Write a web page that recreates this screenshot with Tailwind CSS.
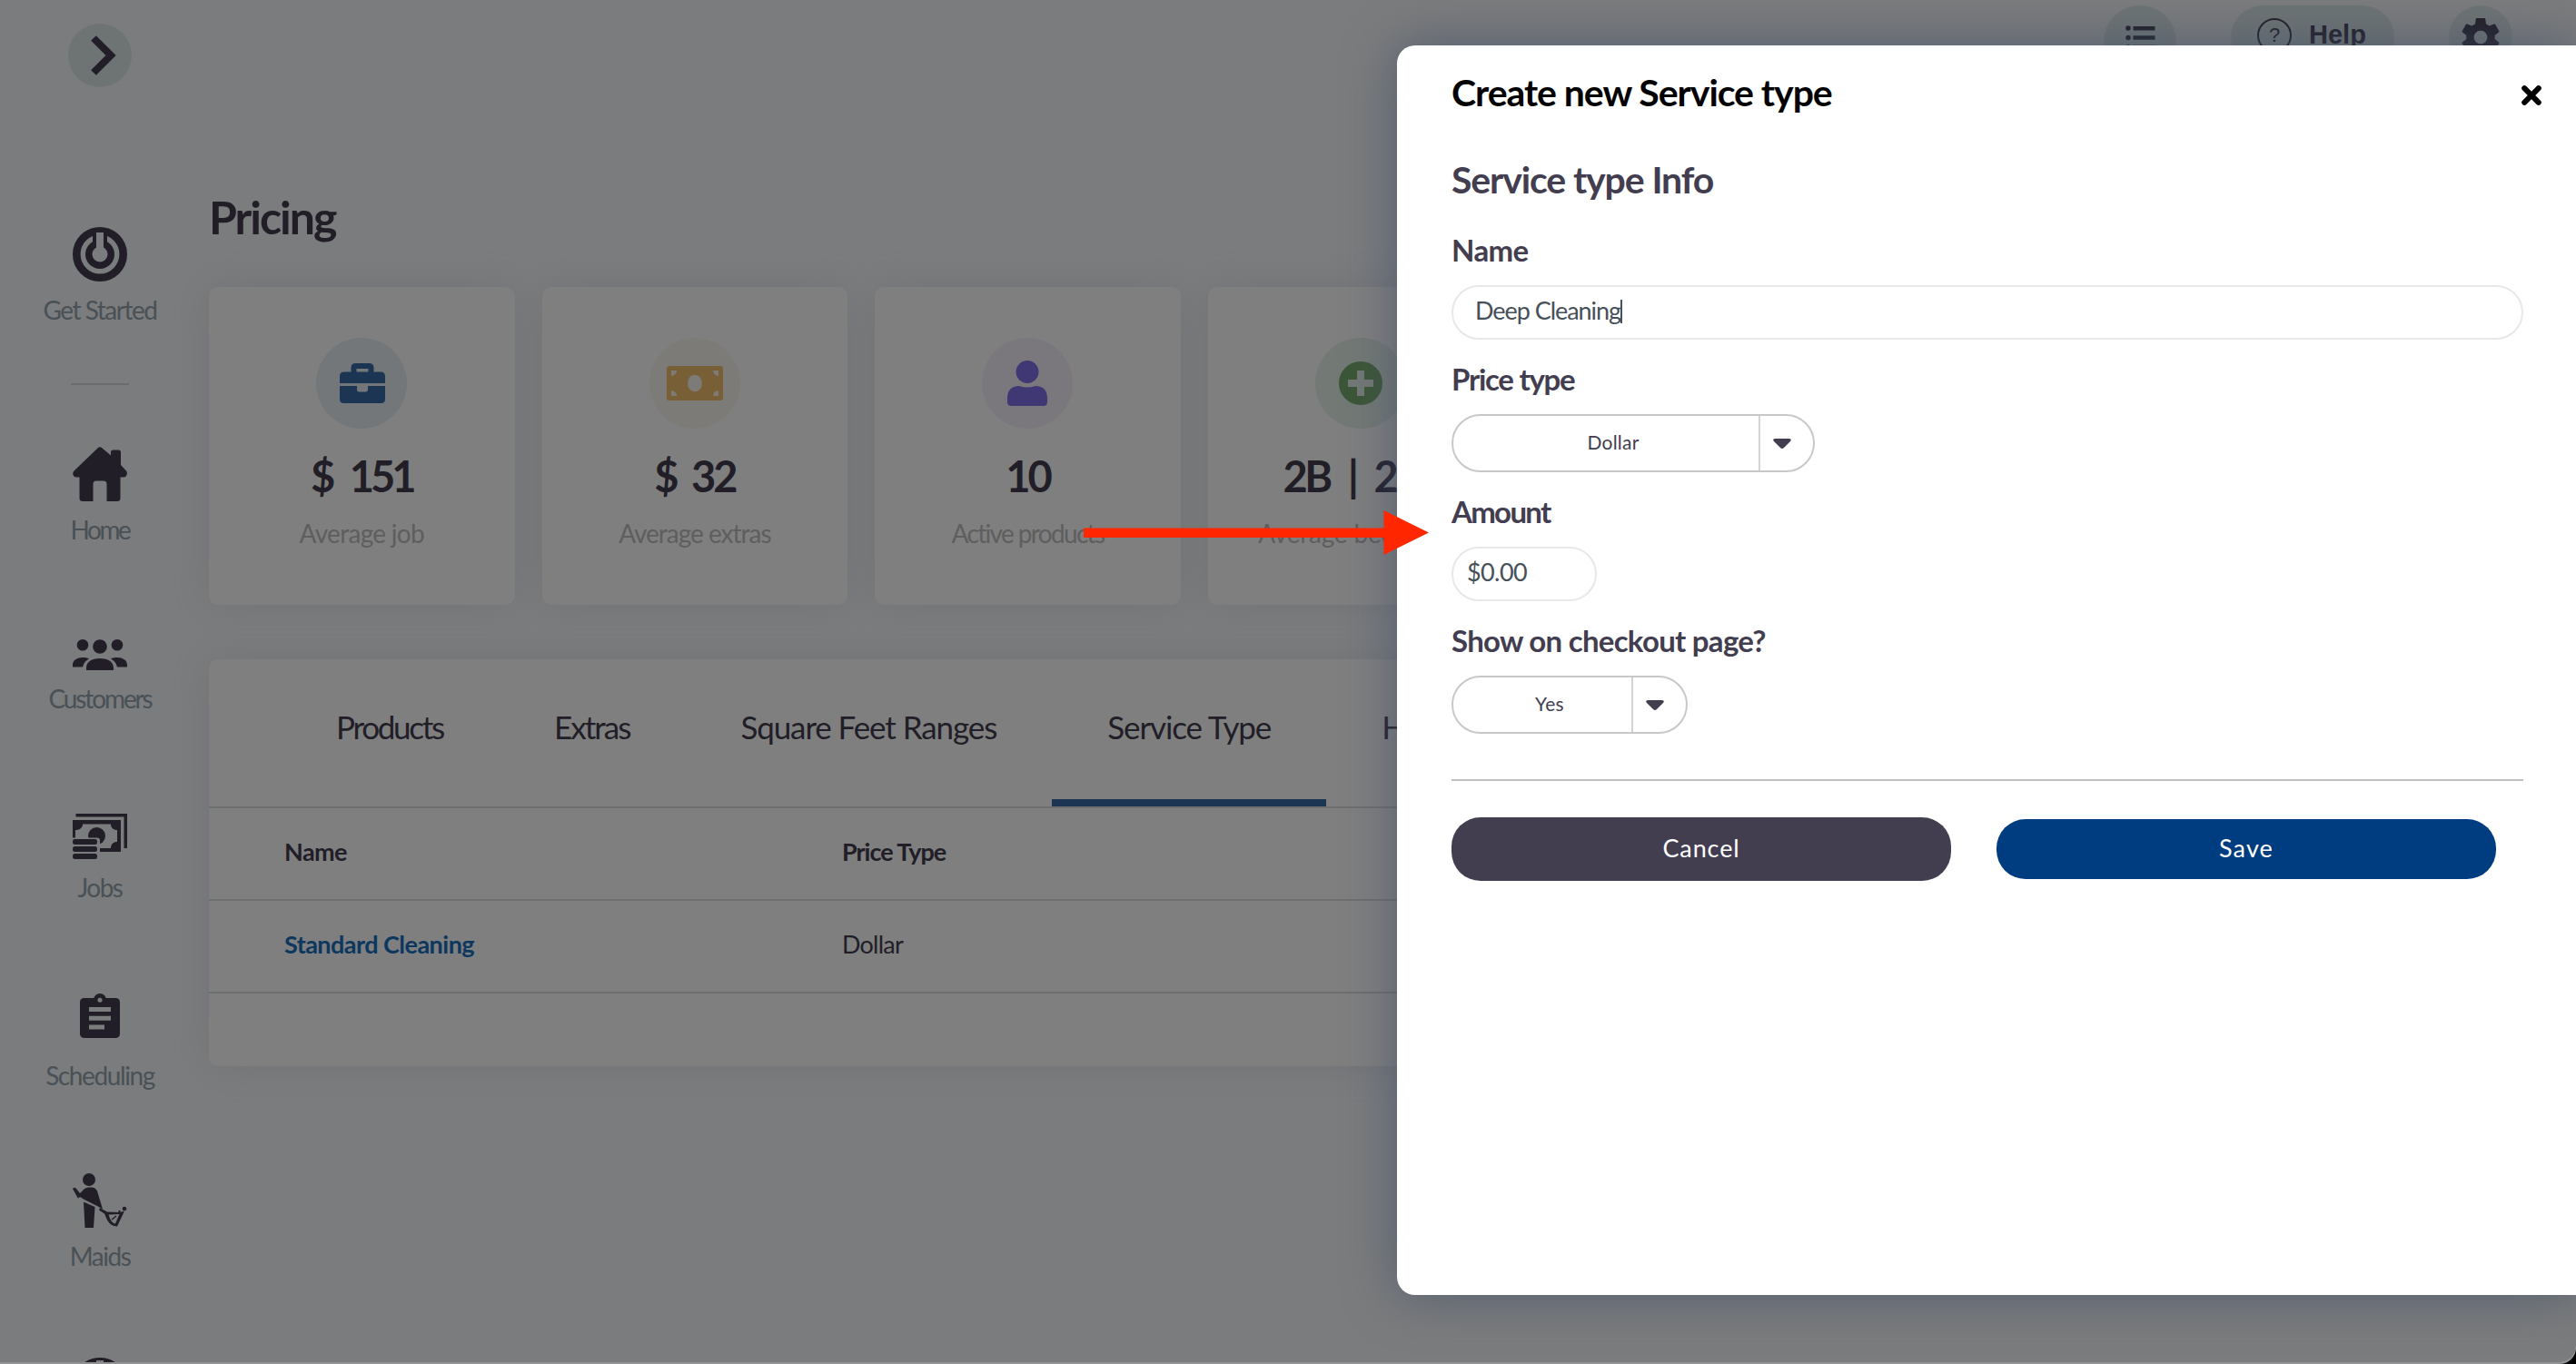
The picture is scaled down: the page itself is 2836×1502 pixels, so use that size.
<!DOCTYPE html>
<html lang="en">
<head>
  <meta charset="UTF-8" />
  <meta name="viewport" content="width=device-width, initial-scale=1.0"/>
  <title>Pricing</title>
  <script src="https://cdn.jsdelivr.net/npm/@tailwindcss/browser@4"></script>
</head>
<body class="bg-black font-['Lato',sans-serif] text-[#433d50]">
  <div class="relative h-[1502px] w-[2836px] overflow-hidden rounded-br-[18px] bg-[#909294]">
    <div class="relative flex h-[1500px] overflow-hidden rounded-br-[18px] bg-[#f6f8fb]">

      <!-- SIDEBAR -->
      <nav class="flex w-[220px] shrink-0 flex-col items-center whitespace-nowrap text-[28px] leading-[34px] text-[#92a3ad]">
        <button class="mt-[26px] flex size-[70px] shrink-0 items-center justify-center rounded-full bg-[#dce8e9]">
          <svg class="ml-[7px] h-[44px] w-[28px]" viewBox="0 0 28 44" fill="none" stroke="#433d50" stroke-width="8"><path d="M3 3l19 19L3 41"/></svg>
        </button>

        <svg class="mt-[154px] size-[60px] shrink-0" viewBox="0 0 60 60">
          <circle cx="30" cy="30" r="25.7" fill="none" stroke="#433d50" stroke-width="8.6"/>
          <circle cx="30" cy="30" r="16" fill="#433d50"/>
          <path d="M22 4h16v18H22z" fill="#433d50"/>
          <circle cx="30" cy="30" r="8.5" fill="#f6f8fb"/>
          <path d="M26 6h8v20h-8z" fill="#f6f8fb"/>
        </svg>
        <span class="mt-[14px] tracking-[-1.5px]">Get Started</span>

        <div class="mt-[64px] h-[2px] w-[64px] shrink-0 bg-[#d5d8db]"></div>

        <svg class="mt-[68px] size-[60px] shrink-0" viewBox="0 0 60 60" fill="#433d50">
          <path d="M27.5 1.5Q30 -1 32.5 1.5L42 9.5V6q0-2.500 2.500-2.500h6q2.500 0 2.500 2.500v14l6 6.500q1.500 2 .5 4.500-1 2.500-3.500 2.500h-3.500v23q0 3.500-3.500 3.500H37.500V41q0-3.500-3.500-3.500h-8q-3.500 0-3.500 3.500v19H11q-3.500 0-3.500-3.500v-23H4Q1.500 33.500.5 31q-.8-2.500 1-4.500z"/>
        </svg>
        <span class="mt-[14px] tracking-[-2.400px]">Home</span>

        <svg class="mt-[104px] h-[34px] w-[60px] shrink-0" viewBox="0 0 60 34" fill="#433d50">
          <circle cx="11" cy="6.3" r="6.3"/><circle cx="49" cy="6.3" r="6.3"/><circle cx="30" cy="8" r="7.8"/>
          <path d="M15 34v-2.500C15 25 21 21 30 21s15 4 15 10.500V34zM0 30.500V28c0-5 5-8 11-8 2.500 0 5 .4 7 1.400-4 2.200-6 5-7 9.100zM60 30.500V28c0-5-5-8-11-8-2.500 0-5 .4-7 1.400 4 2.200 6 5 7 9.100z"/>
        </svg>
        <span class="mt-[14px] tracking-[-2.100px]">Customers</span>

        <svg class="mt-[110px] h-[50px] w-[60px] shrink-0" viewBox="0 0 60 50" fill="#433d50">
          <path d="M3.5 0H60v38h-3.500V3.500h-53z"/>
          <path d="M0 7h53v35H0z"/>
          <path d="M11 11.500h31c0 4 3 6.500 7 6.500v13c-4 0-7 2.500-7 7H3V18c5 0 8-2.500 8-6.500z" fill="#f6f8fb"/>
          <circle cx="26.5" cy="24.5" r="9.5"/>
          <path d="M0 26.500h27q3 0 3 3V50H0z" fill="#f6f8fb"/>
          <rect y="28" width="27" height="6" rx="2.5"/><rect y="36" width="27" height="6" rx="2.5"/><rect y="44" width="27" height="6" rx="2.5"/>
        </svg>
        <span class="mt-[14px] tracking-[-1.500px]">Jobs</span>

        <svg class="mt-[100px] h-[49px] w-[44px] shrink-0" viewBox="0 0 44 49" fill="#433d50">
          <rect y="5" width="44" height="44" rx="4.5"/><circle cx="22" cy="7" r="7"/>
          <circle cx="22" cy="7.2" r="2.5" fill="#f6f8fb"/>
          <path d="M10 15h24v5H10zM10 24.800h24v5H10zM10 34.500h17v5H10z" fill="#f6f8fb"/>
        </svg>
        <span class="mt-[24px] tracking-[-1.400px]">Scheduling</span>

        <svg class="mt-[91px] size-[60px] shrink-0" viewBox="0 0 60 60" fill="#433d50">
          <circle cx="18" cy="7" r="7"/>
          <path d="M0 17q2-2.500 4 0l4 5 5-5q2-1.500 5-1.500h3q4 0 6 4l6 20-5-3-15-7.500-5-3-2 1.500Q6 28 5 26z"/>
          <path d="M12 31.500l12.500 5.500-1.500 23h-9.500z"/>
          <path d="M30 38l8 4.500 14 .5 5-1.500-8 17q-7 0-11-7l-3-7-6-4z"/>
          <path d="M39.500 45.500l12-.5-4.500 10.500q-5-1-7.500-10z" fill="#f6f8fb"/>
          <path d="M43 51l5-4" stroke="#433d50" stroke-width="1.5"/>
          <circle cx="57" cy="39" r="2.3"/><circle cx="51.5" cy="42" r="1.2"/>
        </svg>
        <span class="mt-[14px] tracking-[-1.500px]">Maids</span>

        <svg class="mt-[95px] size-[60px] shrink-0" viewBox="0 0 60 60"><circle cx="30" cy="30" r="25.7" fill="none" stroke="#433d50" stroke-width="8.6"/><path d="M26 3h8v20h-8z" fill="#f6f8fb"/></svg>
      </nav>

      <div class="flex flex-1 flex-col pl-[10px] pr-[70px]">
        <!-- TOP BAR -->
        <header class="mt-[6px] flex h-[80px] shrink-0 items-start justify-end">
          <div class="flex size-[80px] rounded-full bg-[#dce8e9] pl-[24px] pt-[21px]">
            <svg class="h-[30px] w-[34px]" viewBox="0 0 34 30" fill="#433d50"><circle cx="3" cy="4" r="2.8"/><circle cx="3" cy="14.5" r="2.8"/><circle cx="3" cy="25" r="2.8"/><path d="M8.500 2h24v4.500h-24zM8.500 12.300h24v4.500h-24zM8.500 22.700h24v4.500h-24z"/></svg>
          </div>
          <div class="ml-[60px] flex h-[70px] w-[180px] rounded-full bg-[#dce8e9] pl-[29px] pt-[14px]">
            <span class="flex size-[38px] items-center justify-center rounded-full border-2 border-[#433d50] font-['Liberation_Sans',sans-serif] text-[22px] leading-none">?</span>
            <span class="ml-[19px] font-['Liberation_Sans',sans-serif] text-[29px] font-bold leading-[37px]">Help</span>
          </div>
          <div class="ml-[60px] flex size-[70px] justify-center rounded-full bg-[#dce8e9] pt-[14px]">
            <svg class="size-[42px]" viewBox="2 2 20 20" fill="#433d50"><path d="M19.430 12.980c.04-.32.070-.64.070-.98s-.03-.66-.07-.98l2.110-1.650c.19-.15.240-.42.120-.64l-2-3.460c-.12-.22-.39-.3-.61-.22l-2.490 1c-.52-.4-1.080-.73-1.690-.98l-.38-2.650C14.460 2.180 14.250 2 14 2h-4c-.25 0-.46.180-.49.420l-.38 2.650c-.61.250-1.170.590-1.690.980l-2.490-1c-.23-.09-.49 0-.61.220l-2 3.460c-.13.220-.07.490.120.640l2.110 1.650c-.04.320-.07.650-.07.980s.03.660.070.980l-2.110 1.650c-.19.150-.24.420-.12.640l2 3.460c.12.220.39.300.61.220l2.490-1c.52.400 1.080.730 1.690.980l.38 2.650c.03.240.24.420.49.420h4c.25 0 .46-.18.490-.42l.38-2.650c.61-.25 1.170-.59 1.690-.98l2.490 1c.23.090.49 0 .61-.22l2-3.460c.12-.22.070-.49-.12-.64l-2.110-1.650zM12 15.500c-1.930 0-3.500-1.570-3.500-3.500s1.570-3.500 3.500-3.500 3.500 1.570 3.500 3.500-1.570 3.500-3.500 3.500z"/></svg>
          </div>
        </header>

        <h1 class="mt-[122px] text-[50px] font-bold leading-[62px] tracking-[-2px]">Pricing</h1>

        <!-- SUMMARY CARDS -->
        <div class="mt-[46px] grid shrink-0 grid-cols-[336.600px_336.600px_336.600px_336.600px] gap-[30px] whitespace-nowrap text-center">
          <div class="flex h-[350px] flex-col items-center rounded-[10px] bg-white pt-[56px] shadow-[0_0_40px_rgba(150,165,180,0.2)]">
            <div class="flex size-[100px] items-center justify-center rounded-full bg-[#e8eff5]">
              <svg class="ml-[2px] h-[44px] w-[50px]" viewBox="0 0 50 44" fill="#366aa6"><path fill-rule="evenodd" d="M12.500 9.500V5q0-5 5-5h15q5 0 5 5v4.500H45q5 0 5 5V22H0v-7.500q0-5 5-5zM18.500 6v3.500h13V6z"/><path d="M0 25h19v4q0 2.500 2.500 2.500h7Q31 31.500 31 29v-4h19v14.500q0 4.500-4.500 4.500h-41Q0 44 0 39.500z"/></svg>
            </div>
            <p class="mt-[27px] text-[47px] font-bold leading-[50px] tracking-[-4px] [word-spacing:12px]">$ 151</p>
            <p class="mt-[21px] text-[28px] leading-[34px] tracking-[-0.700px] text-[#bdbdbd]">Average job</p>
          </div>
          <div class="flex h-[350px] flex-col items-center rounded-[10px] bg-white pt-[56px] shadow-[0_0_40px_rgba(150,165,180,0.2)]">
            <div class="flex size-[100px] items-center justify-center rounded-full bg-[#fbf7ef]">
              <svg class="h-[38px] w-[62px]" viewBox="0 0 62 38"><rect width="62" height="38" rx="3" fill="#f2be6a"/><path d="M5 5h6a6 6 0 0 1-6 6zM57 5h-6a6 6 0 0 0 6 6zM5 33h6a6 6 0 0 0-6-6zM57 33h-6a6 6 0 0 1 6-6z" fill="#fbf7ef"/><ellipse cx="31" cy="19" rx="8" ry="9.2" fill="#fbf7ef"/></svg>
            </div>
            <p class="mt-[27px] text-[47px] font-bold leading-[50px] tracking-[-3px] [word-spacing:8px]">$ 32</p>
            <p class="mt-[21px] text-[28px] leading-[34px] tracking-[-1px] text-[#bdbdbd]">Average extras</p>
          </div>
          <div class="flex h-[350px] flex-col items-center rounded-[10px] bg-white pt-[56px] shadow-[0_0_40px_rgba(150,165,180,0.2)]">
            <div class="flex size-[100px] items-center justify-center rounded-full bg-[#f4f1fb]">
              <svg class="h-[50px] w-[44px]" viewBox="0 0 44 50" fill="#7e70ea"><circle cx="22" cy="12.5" r="12.5"/><path d="M13 28q9 3 18 0 13 0 13 14v3.500q0 4.500-4.500 4.500h-35Q0 50 0 45.500V42q0-14 13-14z"/></svg>
            </div>
            <p class="mt-[27px] text-[47px] font-bold leading-[50px] tracking-[-3px]">10</p>
            <p class="mt-[21px] text-[28px] leading-[34px] tracking-[-1.650px] text-[#bdbdbd]">Active products</p>
          </div>
          <div class="flex h-[350px] flex-col items-center rounded-[10px] bg-white pt-[56px] shadow-[0_0_40px_rgba(150,165,180,0.2)]">
            <div class="flex size-[100px] items-center justify-center rounded-full bg-[#e6f2ea]">
              <svg class="size-[48px]" viewBox="0 0 48 48"><circle cx="24" cy="24" r="24" fill="#78ac70"/><path d="M20 10h8v10h10v8H28v10h-8V28H10v-8h10z" fill="#e6f2ea"/></svg>
            </div>
            <p class="mt-[27px] text-[47px] font-bold leading-[50px] tracking-[-3.500px] [word-spacing:12px]">2B | 2Ba</p>
            <p class="mt-[21px] text-[28px] leading-[34px] tracking-[-0.200px] text-[#bdbdbd]">Average bed | bath</p>
          </div>
        </div>

        <!-- TABS + TABLE -->
        <section class="mt-[60px] h-[448px] shrink-0 rounded-[10px] bg-white shadow-[0_0_40px_rgba(150,165,180,0.2)]">
          <div class="flex h-[164px] whitespace-nowrap border-b-2 border-[#dadcdc] pl-[79px] text-[35px] leading-[44px]">
            <div class="px-[61px] pt-[52px] tracking-[-2.260px]">Products</div>
            <div class="px-[61px] pt-[52px] tracking-[-1.970px]">Extras</div>
            <div class="px-[61px] pt-[52px] tracking-[-1.100px]">Square Feet Ranges</div>
            <div class="border-b-8 border-[#366aa6] px-[61px] pt-[52px] tracking-[-1.090px]">Service Type</div>
            <div class="px-[61px] pt-[52px] tracking-[-1.090px]">Hourly</div>
          </div>
          <div class="flex h-[102px] items-center border-b-2 border-[#dadcdc] pb-[4px] pl-[83px] text-[27px] font-bold">
            <div class="w-[614px] tracking-[-0.550px]">Name</div>
            <div class="tracking-[-1px]">Price Type</div>
          </div>
          <div class="flex h-[102px] items-center border-b-2 border-[#dadcdc] pb-[4px] pl-[83px] text-[27px]">
            <div class="w-[614px] font-bold tracking-[-0.530px] text-[#1870be]">Standard Cleaning</div>
            <div class="tracking-[-0.780px]">Dollar</div>
          </div>
        </section>
      </div>

      <!-- BACKDROP -->
      <div class="absolute inset-0 bg-black/50"></div>

      <!-- MODAL -->
      <div class="absolute left-[1538px] top-[50px] flex h-[1376px] w-[1298px] flex-col rounded-l-[20px] bg-white pl-[60px] pr-[58px] shadow-[0_0_56px_rgba(66,80,106,0.72)]">
        <div class="flex items-start justify-between text-black">
          <h2 class="pt-[27px] text-[41px] font-bold leading-[50px] tracking-[-1.050px]">Create new Service type</h2>
          <svg class="-mr-[20px] mt-[44px] size-[22px]" viewBox="0 0 22 22" stroke="#000" stroke-width="6" stroke-linecap="round"><path d="M3.200 3.200l15.600 15.600M18.800 3.200L3.200 18.800"/></svg>
        </div>
        <h3 class="mt-[46px] text-[41px] font-bold leading-[50px] tracking-[-1.120px]">Service type Info</h3>

        <label class="mt-[32px] text-[33px] font-bold leading-[40px] tracking-[-0.600px]">Name</label>
        <div class="mt-[19px] flex h-[60px] items-center rounded-full border-2 border-[#e8e8e8] pb-[3px] pl-[24px] text-[27px] text-[#465059]">
          <span class="tracking-[-1.050px]">Deep Cleaning</span><span class="h-[26px] w-[2px] bg-[#465059]"></span>
        </div>

        <label class="mt-[23px] text-[33px] font-bold leading-[40px] tracking-[-1.280px]">Price type</label>
        <div class="mt-[19px] flex h-[64px] w-[400px] items-center rounded-full border-2 border-[#c8c8c8] text-[21px]">
          <div class="flex-1 pb-[3px] pl-[16px] text-center tracking-[0.210px]">Dollar</div>
          <div class="flex h-full w-[60px] items-center border-l-2 border-[#d4d4d4] pl-[14px]">
            <svg class="h-[11px] w-[20px]" viewBox="0 0 20 11" fill="#433d50"><path d="M2 0h16q3 .5 1 3l-7 7q-2 2-4 0L1 3Q-1 .5 2 0z"/></svg>
          </div>
        </div>

        <label class="mt-[23px] text-[33px] font-bold leading-[40px] tracking-[-1.700px]">Amount</label>
        <div class="mt-[19px] flex h-[60px] w-[160px] items-center rounded-full border-2 border-[#e8e8e8] pb-[3px] pl-[15px] text-[27px] tracking-[-0.600px] text-[#465059]">$0.00</div>

        <label class="mt-[23px] text-[33px] font-bold leading-[40px] tracking-[-0.730px]">Show on checkout page?</label>
        <div class="mt-[19px] flex h-[64px] w-[260px] items-center rounded-full border-2 border-[#c8c8c8] text-[21px]">
          <div class="flex-1 pb-[3px] pl-[16px] text-center tracking-[0.330px]">Yes</div>
          <div class="flex h-full w-[60px] items-center border-l-2 border-[#d4d4d4] pl-[14px]">
            <svg class="h-[11px] w-[20px]" viewBox="0 0 20 11" fill="#433d50"><path d="M2 0h16q3 .5 1 3l-7 7q-2 2-4 0L1 3Q-1 .5 2 0z"/></svg>
          </div>
        </div>

        <div class="mt-[50px] h-[2px] shrink-0 bg-[#c0c0c0]"></div>
        <div class="mt-[40px] flex items-center gap-[50px] text-[27px] text-white">
          <button class="h-[70px] w-[550px] rounded-[32px] bg-[#433d50] pb-[2px] tracking-[0.900px]">Cancel</button>
          <button class="h-[66px] w-[550px] rounded-[32px] bg-[#003c80] pb-[2px] tracking-[1.150px]">Save</button>
        </div>
      </div>

      <!-- POINTER ARROW -->
      <svg class="absolute left-[1193px] top-[562px] h-[49px] w-[380px]" viewBox="0 0 380 49" fill="#ff2600"><path d="M0 19.500h330.500V0L380 24.500 330.500 49V30H0z"/></svg>
    </div>
  </div>
</body>
</html>
